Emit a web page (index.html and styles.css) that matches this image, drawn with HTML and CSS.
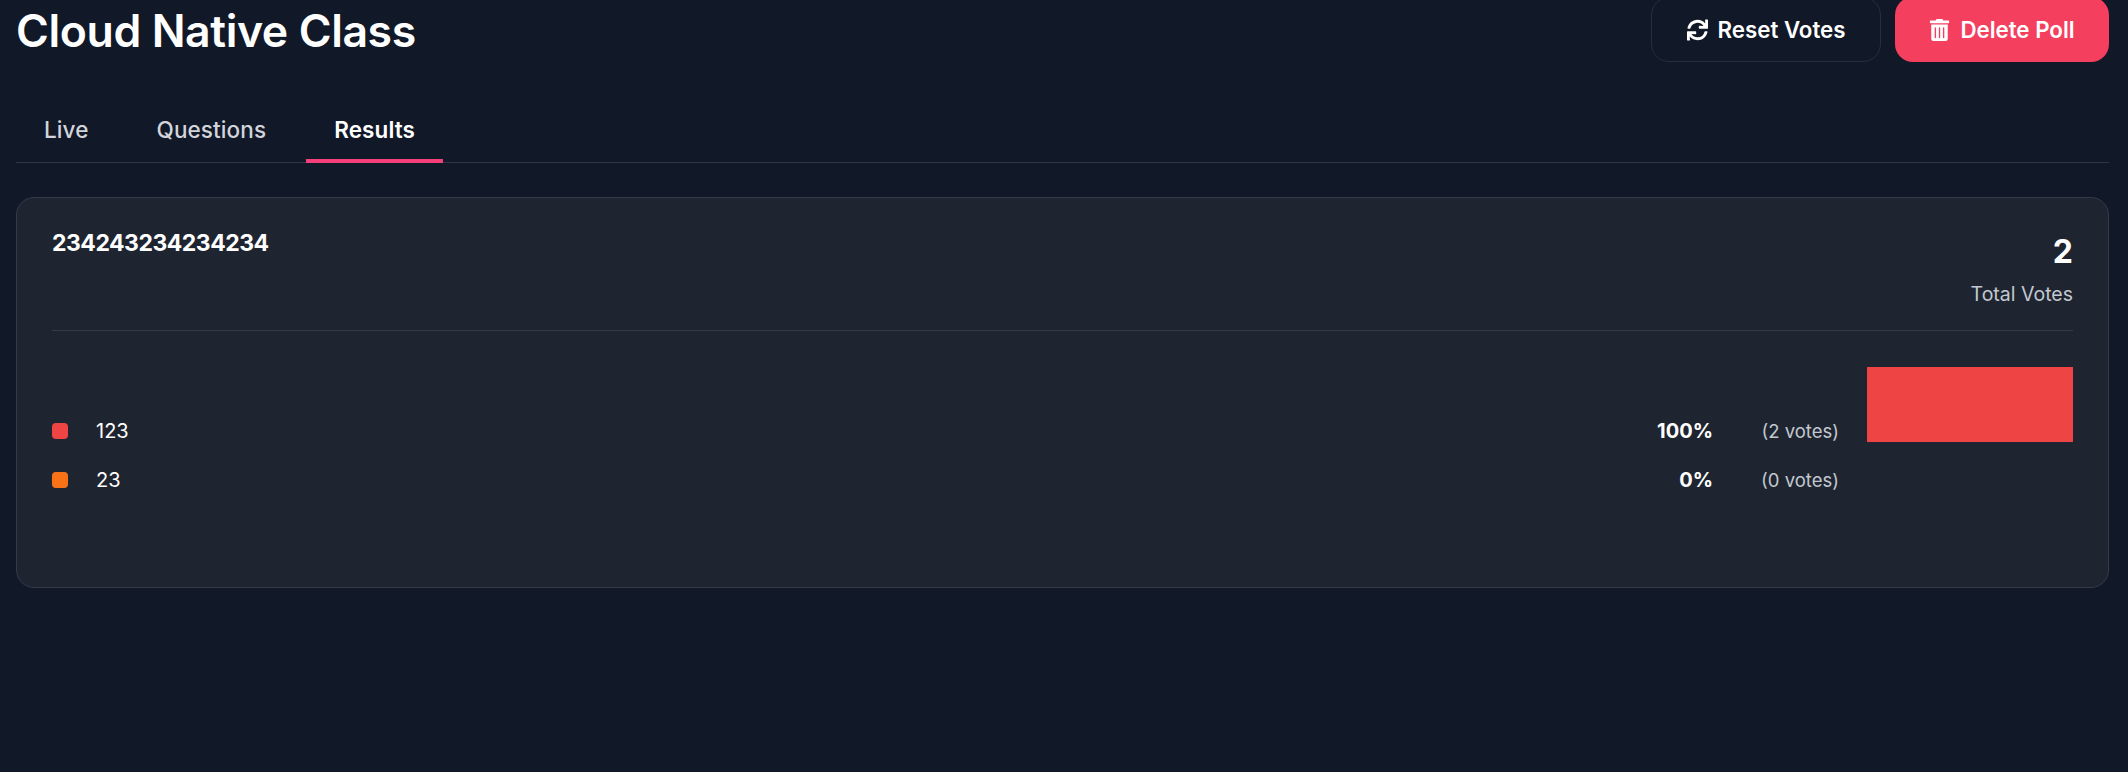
FILE: index.html
```html
<!DOCTYPE html>
<html lang="en">
<head>
    <meta charset="UTF-8">
    <meta name="viewport" content="width=device-width, initial-scale=1.0">
    <title>Cloud Native Class</title>
    <link rel="stylesheet" href="styles.css">
</head>
<body>
    <main class="page">
        <header class="page-header">
            <h1>Cloud Native Class</h1>
            <div class="actions">
                <button class="btn btn-outline" type="button">
                    <svg class="icon" viewBox="0 0 512 512"><path d="M440.65 12.57l4 82.77A247.16 247.16 0 0 0 255.83 8C134.73 8 33.91 94.92 12.29 209.82A12 12 0 0 0 24.09 224h49.05a12 12 0 0 0 11.67-9.26 175.91 175.91 0 0 1 317-56.94l-101.46-4.86a12 12 0 0 0-12.57 12v47.41a12 12 0 0 0 12 12H500a12 12 0 0 0 12-12V12a12 12 0 0 0-12-12h-47.37a12 12 0 0 0-11.98 12.57zM255.83 432a175.61 175.61 0 0 1-146-77.8l101.8 4.87a12 12 0 0 0 12.57-12v-47.4a12 12 0 0 0-12-12H12a12 12 0 0 0-12 12V500a12 12 0 0 0 12 12h47.35a12 12 0 0 0 12-12.6l-4.15-82.57A247.17 247.17 0 0 0 255.83 504c121.11 0 221.93-86.92 243.55-201.82a12 12 0 0 0-11.8-14.18h-49.05a12 12 0 0 0-11.67 9.26A175.86 175.86 0 0 1 255.83 432z"/></svg>
                    Reset Votes
                </button>
                <button class="btn btn-danger" type="button">
                    <svg class="icon" viewBox="0 0 448 512"><path d="M32 464a48 48 0 0 0 48 48h288a48 48 0 0 0 48-48V128H32zm272-256a16 16 0 0 1 32 0v224a16 16 0 0 1-32 0zm-96 0a16 16 0 0 1 32 0v224a16 16 0 0 1-32 0zm-96 0a16 16 0 0 1 32 0v224a16 16 0 0 1-32 0zM432 32H312l-9.4-18.7A24 24 0 0 0 281.1 0H166.8a23.72 23.72 0 0 0-21.4 13.3L136 32H16A16 16 0 0 0 0 48v32a16 16 0 0 0 16 16h416a16 16 0 0 0 16-16V48a16 16 0 0 0-16-16z"/></svg>
                    Delete Poll
                </button>
            </div>
        </header>

        <nav class="tabs">
            <a class="tab" href="#">Live</a>
            <a class="tab" href="#">Questions</a>
            <a class="tab tab-active" href="#">Results</a>
        </nav>

        <section class="card">
            <div class="card-head">
                <h2>234243234234234</h2>
                <div class="total">
                    <div class="total-number">2</div>
                    <div class="total-label">Total Votes</div>
                </div>
            </div>

            <div class="results">
                <div class="result-row">
                    <span class="swatch swatch-red"></span>
                    <span class="result-label">123</span>
                    <span class="result-percent">100%</span>
                    <span class="result-votes">(2 votes)</span>
                    <div class="bar-track"><div class="bar" style="height: 75px"></div></div>
                </div>
                <div class="result-row">
                    <span class="swatch swatch-orange"></span>
                    <span class="result-label">23</span>
                    <span class="result-percent">0%</span>
                    <span class="result-votes">(0 votes)</span>
                    <div class="bar-track"></div>
                </div>
            </div>
        </section>
    </main>
</body>
</html>
```

FILE: styles.css
```css
html, body {
    height: 100%;
    overflow: hidden;
}

body {
    background-color: #111827;
    margin: 0;
    font-family: Inter, "Noto Sans", sans-serif;
    color: #fff;
}

.page {
    padding: 0 19px 0 16px;
}

.page-header {
    display: flex;
    justify-content: space-between;
    align-items: flex-start;
    margin-top: -3px;
}

.page-header h1 {
    margin: 0;
    font-size: 44.6px;
    line-height: 68px;
    font-weight: 600;
    letter-spacing: -0.4px;
}

.actions {
    display: flex;
    gap: 14px;
}

.btn {
    display: flex;
    align-items: center;
    justify-content: center;
    gap: 10px;
    height: 65px;
    border-radius: 18px;
    font-family: inherit;
    font-size: 22.3px;
    font-weight: 600;
    color: #fff;
    box-sizing: border-box;
}

.btn-outline {
    width: 230px;
    background-color: transparent;
    border: 1px solid #272f3d;
}

.btn-danger {
    width: 214px;
    background-color: #f43f5e;
    border: none;
}

.icon {
    width: 21px;
    height: 22px;
    fill: currentColor;
}

.tabs {
    display: flex;
    gap: 12px;
    margin-top: 38px;
    border-bottom: 1px solid #2f3643;
}

.tab {
    padding: 0 28px 3px;
    height: 60px;
    display: flex;
    align-items: center;
    box-sizing: border-box;
    font-size: 22.5px;
    font-weight: 500;
    letter-spacing: 0.1px;
    color: #d1d5db;
    text-decoration: none;
    border-bottom: 4px solid transparent;
    margin-bottom: -1px;
}

.tab-active {
    color: #fff;
    font-weight: 600;
    border-bottom-color: #f43f7a;
}

.card {
    margin-top: 34px;
    background-color: #1f2530;
    border: 1px solid #333b49;
    border-radius: 18px;
    padding: 30px 35px 96px;
}

.card-head {
    display: flex;
    justify-content: space-between;
    align-items: flex-start;
    border-bottom: 1px solid #333b49;
    height: 102px;
}

.card-head h2 {
    margin: 0;
    font-size: 23px;
    line-height: 30px;
    font-weight: 700;
    letter-spacing: -0.5px;
}

.total {
    text-align: right;
}

.total-number {
    font-size: 32px;
    line-height: 48px;
    font-weight: 700;
}

.total-label {
    margin-top: 3px;
    font-size: 19.5px;
    line-height: 30px;
    color: #c3c8d0;
}

.results {
    margin-top: 36px;
    display: flex;
    flex-direction: column;
    gap: 27px;
}

.result-row {
    display: flex;
    align-items: flex-end;
    font-size: 20px;
    line-height: 22px;
}

.swatch {
    width: 16px;
    height: 16px;
    border-radius: 4px;
    margin-right: 28px;
    margin-bottom: 3px;
}

.swatch-red {
    background-color: #ef4444;
}

.swatch-orange {
    background-color: #f97316;
}

.result-label {
    flex: 1;
}

.result-percent {
    font-weight: 700;
    text-align: right;
}

.result-votes {
    width: 126px;
    text-align: right;
    font-size: 18.5px;
    color: #c3c8d0;
}

.bar-track {
    width: 206px;
    margin-left: 28px;
}

.bar {
    width: 100%;
    background-color: #ef4444;
}
```
